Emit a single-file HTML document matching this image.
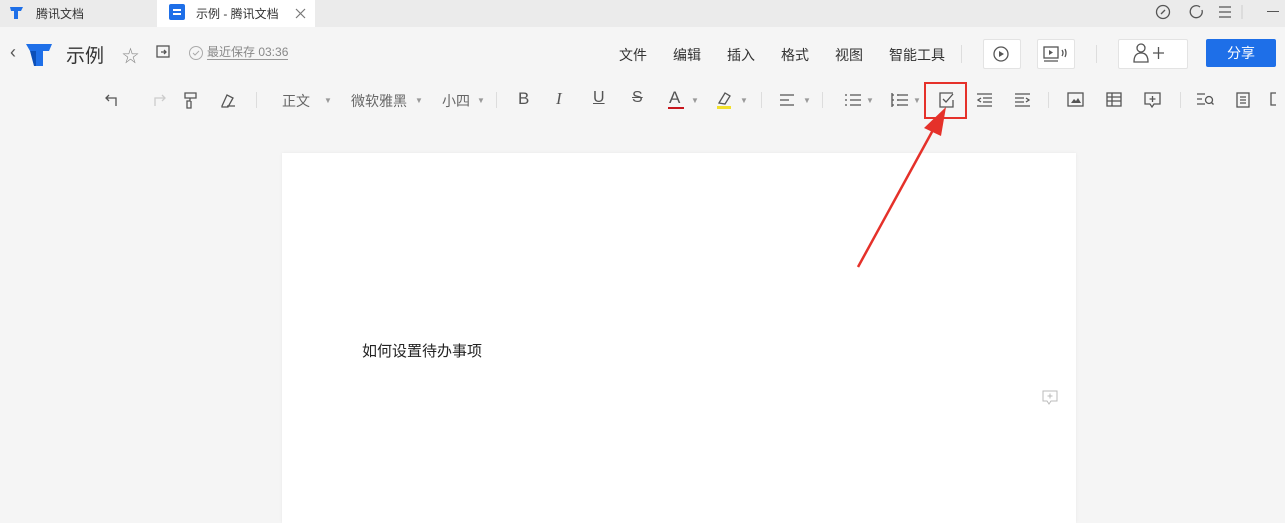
<!DOCTYPE html>
<html><head><meta charset="utf-8"><style>
body{margin:0;width:1285px;height:519px;background:#f5f5f5;font-family:"Liberation Sans","Noto Sans CJK SC",sans-serif;position:relative;overflow:hidden;color:#333}
.a{position:absolute;white-space:nowrap}
.tabbar{position:absolute;left:0;top:0;width:1285px;height:27px;background:#ebebeb}
.t{font-size:12px}
.menu{font-size:14px;color:#333}
.tb{font-size:14px;color:#666}
.ic{stroke:#555;fill:none;stroke-width:1.3}
.sep{position:absolute;width:1px;height:16px;background:#ddd;top:92px}
.caret{font-size:8px;color:#999}
</style></head><body>
<div class="tabbar"></div>
<div class="a" style="left:157px;top:0;width:158px;height:27px;background:#fff"></div>
<svg class="a" style="left:9px;top:4px" width="16" height="16"><path d="M1 3h13l-2 4h-3v8h-4v-8H2z" fill="#1e6fe8"/></svg>
<div class="a t" style="left:36px;top:5px">腾讯文档</div>
<div class="a" style="left:169px;top:4px;width:16px;height:16px;background:#1e6fe8;border-radius:2px"><div style="position:absolute;left:4px;top:5px;width:8px;height:2px;background:#fff"></div><div style="position:absolute;left:4px;top:9px;width:8px;height:2px;background:#fff"></div></div>
<div class="a t" style="left:196px;top:5px">示例 - 腾讯文档</div>
<svg class="a" style="left:295px;top:8px" width="11" height="11"><path d="M1 1l9 9M10 1l-9 9" stroke="#777" stroke-width="1.2"/></svg>
<svg class="a" style="left:1154px;top:3px" width="100" height="18"><circle cx="9" cy="9" r="6.5" class="ic"/><path d="M7 11l4-4" class="ic"/><path d="M46 4a6 6 0 1 0 2 3" class="ic"/><path d="M65 4h12M65 9h12M65 14h12" class="ic"/><path d="M88 2v14" stroke="#ccc"/></svg>
<div class="a" style="left:1267px;top:11px;width:12px;height:1px;background:#555"></div>
<!-- header -->
<div class="a" style="left:10px;top:42px;font-size:18px;color:#555">‹</div>
<svg class="a" style="left:24px;top:40px" width="30" height="27"><path d="M2 4h26l-3 7h-6v15h-7v-15H6z" fill="#1e6fe8"/><path d="M6 11h6v15h-2z" fill="#0c4fb8"/></svg>
<div class="a" style="left:66px;top:41px;font-size:19px;color:#333">示例</div>
<div class="a" style="left:122px;top:42px;font-size:17px;color:#888">☆</div>
<svg class="a" style="left:156px;top:45px" width="14" height="14"><rect x="1" y="1" width="12" height="11" class="ic" stroke="#888"/><path d="M5 7h5M8 5l2 2-2 2" class="ic"/></svg>
<svg class="a" style="left:188px;top:45px" width="16" height="16"><circle cx="8" cy="8" r="6.5" fill="none" stroke="#aaa"/><path d="M5 8l2 2 4-4" fill="none" stroke="#aaa"/></svg>
<div class="a" style="left:207px;top:45px;font-size:12px;color:#888;border-bottom:1px solid #999;line-height:14px">最近保存 03:36</div>
<div class="a menu" style="left:619px;top:45px">文件</div>
<div class="a menu" style="left:673px;top:45px">编辑</div>
<div class="a menu" style="left:727px;top:45px">插入</div>
<div class="a menu" style="left:781px;top:45px">格式</div>
<div class="a menu" style="left:835px;top:45px">视图</div>
<div class="a menu" style="left:889px;top:45px">智能工具</div>
<div class="a" style="left:961px;top:45px;width:1px;height:18px;background:#ddd"></div>
<div class="a" style="left:983px;top:39px;width:36px;height:28px;background:#fff;border:1px solid #e3e3e3;border-radius:2px"></div>
<svg class="a" style="left:992px;top:45px" width="18" height="18"><circle cx="9" cy="9" r="7" class="ic"/><path d="M7 6v6l5-3z" fill="#555"/></svg>
<div class="a" style="left:1037px;top:39px;width:36px;height:28px;background:#fff;border:1px solid #e3e3e3;border-radius:2px"></div>
<svg class="a" style="left:1043px;top:45px" width="26" height="18"><rect x="1" y="2" width="14" height="11" class="ic"/><path d="M6 5v5l4-2.5z" fill="#555"/><path d="M1 16h14M19 5q2 3 0 6M22 4q2 4 0 8" class="ic"/></svg>
<div class="a" style="left:1096px;top:45px;width:1px;height:18px;background:#ddd"></div>
<div class="a" style="left:1118px;top:39px;width:68px;height:28px;background:#fff;border:1px solid #e3e3e3;border-radius:2px"></div>
<svg class="a" style="left:1132px;top:42px" width="40" height="22"><circle cx="9" cy="6" r="4" class="ic"/><path d="M2 20q0-9 7-9t7 9z" class="ic"/><path d="M21 11h11M26.5 5v12" class="ic"/></svg>
<div class="a" style="left:1206px;top:39px;width:70px;height:28px;background:#1e6fe8;border-radius:2px;color:#fff;font-size:14px;text-align:center;line-height:28px">分享</div>
<!-- toolbar -->
<svg class="a" style="left:105px;top:90px" width="140" height="20"><path d="M4 5l-3 3 3 3M1 8h10v8" class="ic"/><path d="M57 5l3 3-3 3M60 8H50v8" stroke="#ccc" fill="none" stroke-width="1.3"/><path d="M80 3h11v5H80zM85 8v3h-3v7h4v-7" class="ic"/><path d="M117 16l5-11 6 3-5 9h-6zM122 16h8" class="ic"/></svg>
<div class="sep" style="left:256px"></div>
<div class="a tb" style="left:282px;top:91px">正文</div><div class="a caret" style="left:324px;top:96px">▼</div>
<div class="a tb" style="left:351px;top:91px">微软雅黑</div><div class="a caret" style="left:415px;top:96px">▼</div>
<div class="a tb" style="left:442px;top:91px">小四</div><div class="a caret" style="left:477px;top:96px">▼</div>
<div class="sep" style="left:496px"></div>
<div class="a" style="left:518px;top:89px;font-size:17px;color:#555">B</div>
<div class="a" style="left:556px;top:89px;font-size:17px;color:#555;font-family:'Liberation Serif';font-style:italic">I</div>
<div class="a" style="left:593px;top:89px;font-size:16px;color:#555;text-decoration:underline">U</div>
<div class="a" style="left:632px;top:89px;font-size:16px;color:#555;text-decoration:line-through">S</div>
<div class="a" style="left:669px;top:88px;font-size:17px;color:#555">A</div>
<div class="a" style="left:668px;top:107px;width:16px;height:2px;background:#c8161d"></div><div class="a caret" style="left:691px;top:96px">▼</div>
<svg class="a" style="left:716px;top:90px" width="20" height="20"><path d="M3 13l6-10 5 3-5 8z" class="ic"/><rect x="1" y="16" width="14" height="3" fill="#f2e02a"/></svg><div class="a caret" style="left:740px;top:96px">▼</div>
<div class="sep" style="left:761px"></div>
<svg class="a" style="left:779px;top:92px" width="120" height="16"><path d="M1 3h14M1 8h9M1 13h14" class="ic"/><path d="M66 3h2M66 8h2M66 13h2M71 3h11M71 8h11M71 13h11" class="ic"/><path d="M113 3h2M113 8h2M113 13h2M118 3h11M118 8h11M118 13h11" class="ic"/></svg>
<div class="a caret" style="left:803px;top:96px">▼</div>
<div class="sep" style="left:822px"></div>
<div class="a caret" style="left:866px;top:96px">▼</div>
<svg class="a" style="left:890px;top:92px" width="20" height="16"><path d="M2 1v14M7 3h11M7 8h11M7 13h11" class="ic"/></svg>
<div class="a caret" style="left:913px;top:96px">▼</div>
<svg class="a" style="left:938px;top:91px" width="18" height="18"><path d="M15 2H2v14h13V9" class="ic"/><path d="M5 8l3 3 7-8" class="ic"/></svg>
<svg class="a" style="left:976px;top:92px" width="60" height="16"><path d="M1 2h15M7 6h9M7 10h9M1 14h15M5 6l-3 2 3 2" class="ic"/><path d="M39 2h15M39 6h9M39 10h9M39 14h15M50 6l3 2-3 2" class="ic"/></svg>
<div class="sep" style="left:1048px"></div>
<svg class="a" style="left:1066px;top:91px" width="210" height="18"><rect x="2" y="2" width="15" height="13" class="ic"/><path d="M5 12l3-4 2 2 2-3 3 5z" fill="#555"/><rect x="41" y="2" width="14" height="13" class="ic"/><path d="M41 6h14M41 10h14M46 2v13" class="ic"/><path d="M79 2h15v11h-6l-2 3-2-3h-5z" class="ic"/><path d="M86.5 5v6M83.5 8h6" class="ic"/><path d="M131 3h8M131 8h5M131 13h8" class="ic"/><circle cx="143" cy="9" r="3.5" class="ic"/><path d="M145.5 11.5l2 2" class="ic"/><rect x="171" y="2" width="12" height="14" class="ic"/><path d="M174 6h6M174 9h6M174 12h6" class="ic"/><path d="M205 2h10v12h-10z" class="ic"/></svg>
<div class="sep" style="left:1180px"></div>
<div class="a" style="left:924px;top:82px;width:39px;height:33px;border:2px solid #e5312a"></div>
<div class="a" style="left:282px;top:153px;width:794px;height:370px;background:#fff;box-shadow:0 0 3px rgba(0,0,0,0.06)"></div>
<div class="a" style="left:362px;top:340px;font-size:15px;color:#222">如何设置待办事项</div>
<svg class="a" style="left:1041px;top:389px" width="18" height="18"><path d="M2 2h14v10h-6l-2 3-2-3H2z" fill="none" stroke="#bbb"/><path d="M9 4.5v5M6.5 7h5" stroke="#bbb"/></svg>
<svg class="a" style="left:0;top:0" width="1285" height="519"><path d="M858 267L933 130" stroke="#e5312a" stroke-width="2.5"/><path d="M946 107L924 128l17 8z" fill="#e5312a"/></svg>
</body></html>
